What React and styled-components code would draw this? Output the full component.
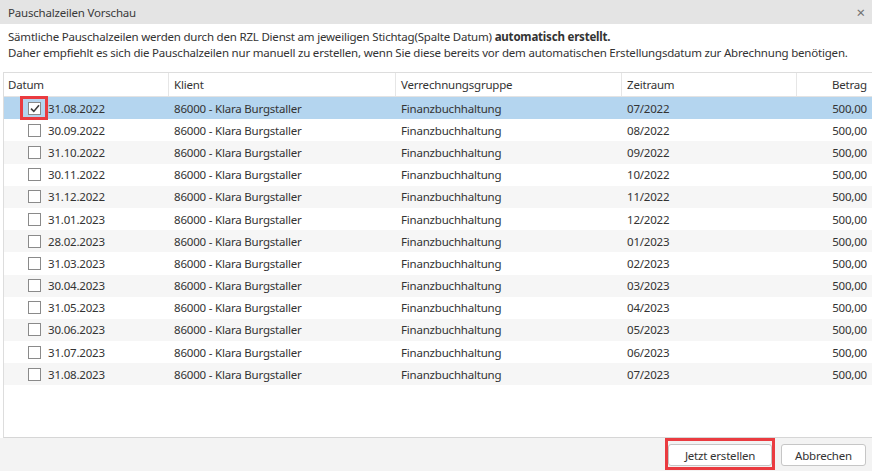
import React from "react";
import styled, { createGlobalStyle } from "styled-components";

const GlobalStyle = createGlobalStyle`
  html, body {
    margin: 0;
    padding: 0;
    background: #ffffff;
  }
  body {
    font-family: "Noto Sans", "Open Sans", sans-serif;
    font-size: 11.5px;
    letter-spacing: -0.2px;
    color: #333333;
  }
`;

const Window = styled.div`
  width: 872px;
  height: 471px;
  display: flex;
  flex-direction: column;
  background: #ffffff;
  overflow: hidden;
`;

const TitleBar = styled.div`
  height: 24px;
  flex: none;
  display: flex;
  align-items: center;
  justify-content: space-between;
  padding: 0 8px;
  background: #e4e4e4;
  color: #3a3a3a;
`;

const CloseButton = styled.span`
  font-size: 15px;
  color: #707070;
  line-height: 1;
  margin-right: -1px;
`;

const Info = styled.div`
  padding: 5px 8px 11px;
  line-height: 16px;
  flex: none;
  white-space: nowrap;
`;

const TableWrap = styled.div`
  flex: 1;
  margin-left: 3px;
  border-top: 1px solid #dddddd;
  border-left: 1px solid #dddddd;
  border-bottom: 1px solid #d6d6d6;
  display: flex;
  flex-direction: column;
`;

const Columns = "164px 227px 226px 175px 1fr";

const HeaderRow = styled.div`
  display: grid;
  grid-template-columns: ${Columns};
  height: 23px;
  border-bottom: 1px solid #e3e3e3;
`;

const HeaderCell = styled.div`
  display: flex;
  align-items: center;
  justify-content: ${(p) => (p.$right ? "flex-end" : "flex-start")};
  padding: 0 5px 0 ${(p) => (p.$first ? "4px" : "5px")};
  border-left: ${(p) => (p.$first ? "none" : "1px solid #e6e6e6")};
`;

const Row = styled.div`
  display: grid;
  grid-template-columns: ${Columns};
  height: 22.2px;
  background: ${(p) => (p.$selected ? "#b4d5ef" : p.$alt ? "#f6f6f6" : "#ffffff")};
`;

const Cell = styled.div`
  display: flex;
  align-items: center;
  justify-content: ${(p) => (p.$right ? "flex-end" : "flex-start")};
  padding: 0 5px 0 ${(p) => (p.$first ? "24px" : "6px")};
  white-space: nowrap;
`;

const Box = styled.span`
  position: relative;
  width: 11px;
  height: 11px;
  border: 1px solid #8a8a8a;
  background: #ffffff;
  margin-right: 7px;
  display: inline-flex;
  align-items: center;
  justify-content: center;
  flex: none;
`;

const Marker = styled.span`
  position: absolute;
  top: -7px;
  bottom: -6px;
  left: -9px;
  right: -8px;
  border: 3px solid #ea3b40;
  pointer-events: none;
`;

const Footer = styled.div`
  height: 33px;
  flex: none;
  background: #f3f3f3;
  display: flex;
  align-items: center;
  justify-content: flex-end;
  gap: 9px;
  padding-right: 6px;
`;

const Button = styled.button`
  position: relative;
  height: 22px;
  width: ${(p) => p.$w}px;
  border: 1px solid #c6c6c6;
  border-radius: 3px;
  background: #ffffff;
  font-family: inherit;
  font-size: 11.5px;
  letter-spacing: -0.2px;
  color: #333333;
  padding: 0;
  margin-top: 1px;
`;

const ButtonMarker = styled.span`
  position: absolute;
  top: -7px;
  bottom: -5px;
  left: -4px;
  right: -4px;
  border: 3px solid #ea3b40;
  pointer-events: none;
`;

const Strong = styled.b`
  font-weight: 700;
`;

const dates = [
  "31.08.2022", "30.09.2022", "31.10.2022", "30.11.2022", "31.12.2022",
  "31.01.2023", "28.02.2023", "31.03.2023", "30.04.2023", "31.05.2023",
  "30.06.2023", "31.07.2023", "31.08.2023",
];
const periods = [
  "07/2022", "08/2022", "09/2022", "10/2022", "11/2022", "12/2022",
  "01/2023", "02/2023", "03/2023", "04/2023", "05/2023", "06/2023", "07/2023",
];

function Check({ checked }) {
  return (
    <Box>
      {checked && (
        <>
          <svg width="10" height="9" viewBox="0 0 10 9">
            <path d="M1 4.6 L3.8 7.4 L9 1.2" fill="none" stroke="#3d3d3d" strokeWidth="1.6" />
          </svg>
          <Marker />
        </>
      )}
    </Box>
  );
}

export default function App() {
  return (
    <>
      <GlobalStyle />
      <Window>
        <TitleBar>
          <span>Pauschalzeilen Vorschau</span>
          <CloseButton>×</CloseButton>
        </TitleBar>
        <Info>
          Sämtliche Pauschalzeilen werden durch den RZL Dienst am jeweiligen Stichtag(Spalte Datum){" "}
          <Strong>automatisch erstellt.</Strong>
          <br />
          Daher empfiehlt es sich die Pauschalzeilen nur manuell zu erstellen, wenn Sie diese bereits vor dem automatischen Erstellungsdatum zur Abrechnung benötigen.
        </Info>
        <TableWrap>
          <HeaderRow>
            <HeaderCell $first>Datum</HeaderCell>
            <HeaderCell>Klient</HeaderCell>
            <HeaderCell>Verrechnungsgruppe</HeaderCell>
            <HeaderCell>Zeitraum</HeaderCell>
            <HeaderCell $right>Betrag</HeaderCell>
          </HeaderRow>
          {dates.map((d, i) => (
            <Row key={d + i} $selected={i === 0} $alt={i % 2 === 0}>
              <Cell $first>
                <Check checked={i === 0} />
                {d}
              </Cell>
              <Cell>86000 - Klara Burgstaller</Cell>
              <Cell>Finanzbuchhaltung</Cell>
              <Cell>{periods[i]}</Cell>
              <Cell $right>500,00</Cell>
            </Row>
          ))}
        </TableWrap>
        <Footer>
          <Button $w={104}>
            Jetzt erstellen
            <ButtonMarker />
          </Button>
          <Button $w={85}>Abbrechen</Button>
        </Footer>
      </Window>
    </>
  );
}
